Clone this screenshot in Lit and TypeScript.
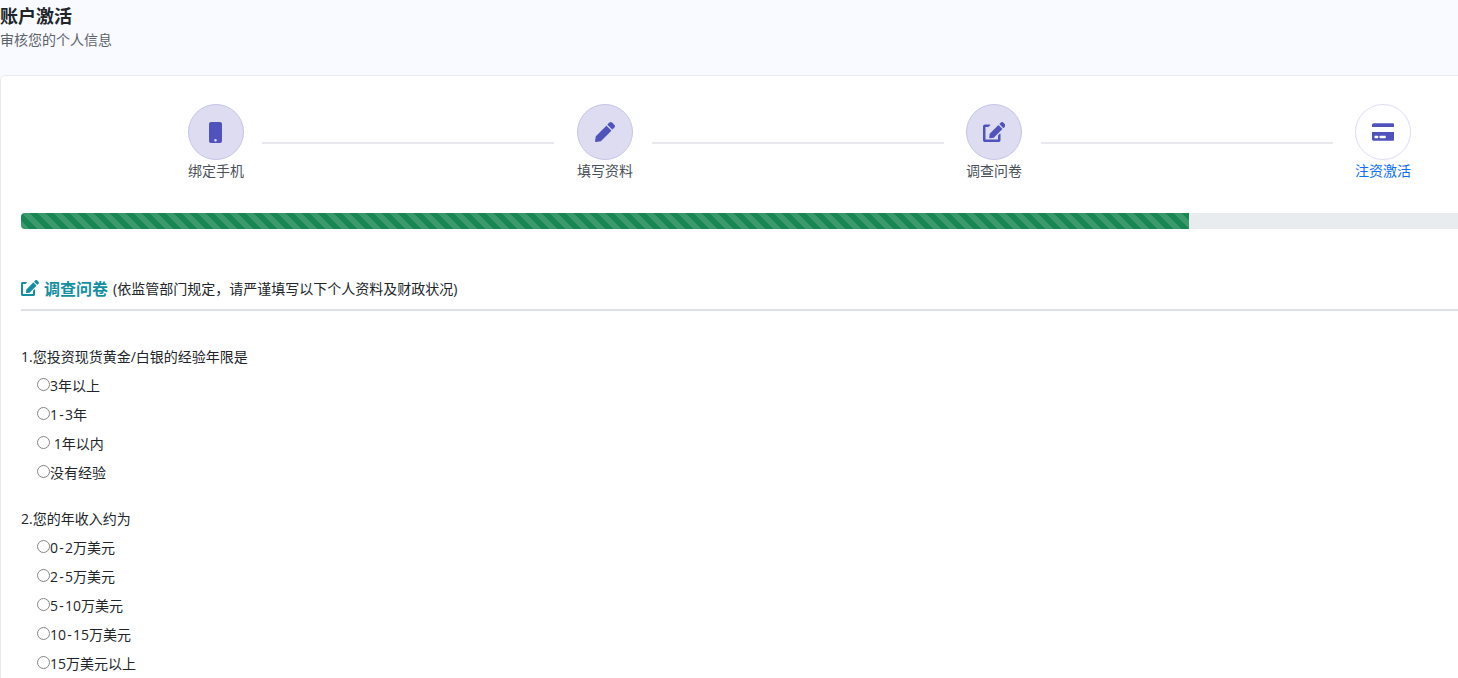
import { LitElement, html, css, svg } from "lit";
import { customElement } from "lit/decorators.js";

const ICONS = {
  mobile: { vb: "0 0 320 512", d: "M272 0H48C21.5 0 0 21.5 0 48v416c0 26.5 21.5 48 48 48h224c26.5 0 48-21.5 48-48V48c0-26.5-21.5-48-48-48zM160 480c-17.7 0-32-14.3-32-32s14.3-32 32-32 32 14.3 32 32-14.3 32-32 32z" },
  pen: { vb: "0 0 512 512", d: "M497.9 142.1l-46.1 46.1c-4.7 4.7-12.3 4.7-17 0l-111-111c-4.7-4.7-4.7-12.3 0-17l46.1-46.1c18.7-18.7 49.1-18.7 67.9 0l60.1 60.1c18.8 18.7 18.8 49.1 0 67.9zM284.2 99.8L21.6 362.4.4 483.9c-2.9 16.4 11.4 30.6 27.8 27.8l121.5-21.3 262.6-262.6c4.7-4.7 4.7-12.3 0-17l-111-111c-4.8-4.7-12.4-4.7-17.1 0z" },
  edit: { vb: "0 0 576 512", d: "M402.6 83.2l90.2 90.2c3.8 3.8 3.8 10 0 13.8L274.4 405.6l-92.8 10.3c-12.4 1.4-22.9-9.1-21.5-21.5l10.3-92.8L388.8 83.2c3.8-3.8 10-3.8 13.8 0zm162-22.9l-48.8-48.8c-15.2-15.2-39.9-15.2-55.2 0l-35.4 35.4c-3.8 3.8-3.8 10 0 13.8l90.2 90.2c3.8 3.8 10 3.8 13.8 0l35.4-35.4c15.2-15.3 15.2-40 0-55.2zM384 346.2V448H64V128h73.1c3.2 0 6.2-1.3 8.5-3.5l40-40c7.6-7.6 2.2-20.5-8.5-20.5H48C21.5 64 0 85.5 0 112v352c0 26.5 21.5 48 48 48h352c26.5 0 48-21.5 48-48V306.2c0-10.7-12.9-16-20.5-8.5l-40 40c-2.2 2.3-3.5 5.3-3.5 8.5z" },
  card: { vb: "0 0 576 512", d: "M0 432c0 26.5 21.5 48 48 48h480c26.5 0 48-21.5 48-48V256H0v176zm192-68c0-6.6 5.4-12 12-12h136c6.6 0 12 5.4 12 12v40c0 6.6-5.4 12-12 12H204c-6.6 0-12-5.4-12-12v-40zm-128 0c0-6.6 5.4-12 12-12h72c6.6 0 12 5.4 12 12v40c0 6.6-5.4 12-12 12H76c-6.6 0-12-5.4-12-12v-40zM576 80v48H0V80c0-26.5 21.5-48 48-48h480c26.5 0 48 21.5 48 48z" },
};
type IconName = keyof typeof ICONS;

const icon = (name: IconName, cls: string) =>
  html`<svg class=${cls} viewBox=${ICONS[name].vb} fill="currentColor" aria-hidden="true">${svg`<path d=${ICONS[name].d}></path>`}</svg>`;

const STEPS: { label: string; icon: IconName; done: boolean }[] = [
  { label: "绑定手机", icon: "mobile", done: true },
  { label: "填写资料", icon: "pen", done: true },
  { label: "调查问卷", icon: "edit", done: true },
  { label: "注资激活", icon: "card", done: false },
];

const QUESTIONS = [
  { title: "1.您投资现货黄金/白银的经验年限是", options: ["3年以上", "1-3年", " 1年以内", "没有经验"] },
  { title: "2.您的年收入约为", options: ["0-2万美元", "2-5万美元", "5-10万美元", "10-15万美元", "15万美元以上"] },
];

/* The reference font sets a wider hyphen than any installed family. */
const withHyphen = (text: string) => {
  const [a, b] = text.split("-");
  return b === undefined ? text : html`${a}<span class="hy">-</span>${b}`;
};

@customElement("app-root")
export class AppRoot extends LitElement {
  static styles = css`
    :host {
      display: block;
      width: 1458px;
      height: 678px;
      overflow: hidden;
      background: #f9faff;
      font-family: "Open Sans", "Noto Sans CJK SC", sans-serif;
      font-size: 14px;
      color: #212529;
    }
    .head {
      height: 75px;
      box-sizing: border-box;
      padding-top: 5px;
    }
    h1 {
      margin: 0;
      font-size: 18px;
      line-height: 22px;
      font-weight: 700;
      color: #212529;
    }
    .sub {
      margin-top: 2px;
      line-height: 21px;
      color: #5c636a;
    }
    .card {
      box-sizing: border-box;
      width: 1598px;
      height: 700px;
      padding: 28px 20px 0;
      background: #fff;
      border: 1px solid #e9ecef;
      border-radius: 5px;
    }
    .steps {
      display: flex;
      align-items: flex-start;
      padding-left: 167px;
    }
    .step {
      width: 56px;
      flex: none;
      display: flex;
      flex-direction: column;
      align-items: center;
    }
    .circle {
      box-sizing: border-box;
      width: 56px;
      height: 56px;
      border-radius: 50%;
      display: flex;
      align-items: center;
      justify-content: center;
      color: #5153bd;
      background: #dddcf1;
      border: 1px solid #c5c4e8;
    }
    .circle.todo {
      background: #fff;
      border-color: #dddcf1;
    }
    .si-mobile { height: 21px; width: 13px; margin-right: 1px; }
    .si-pen { height: 20px; width: 20px; }
    .si-edit { height: 20px; width: 22.5px; }
    .si-card { height: 20px; width: 22.5px; }
    .label {
      line-height: 21px;
      white-space: nowrap;
      color: #495057;
    }
    .label.todo { color: #0d6efd; }
    .line {
      flex: none;
      width: 292px;
      height: 2px;
      margin: 38px 22px 0 19px;
      background: #e9e8ef;
    }
    .line.first { margin-left: 18px; margin-right: 23px; }
    .progress {
      height: 16px;
      margin-top: 32px;
      background: #e9ecef;
      border-radius: 4px;
      overflow: hidden;
    }
    .bar {
      width: 1168px;
      height: 100%;
      background-color: #198754;
      background-image: linear-gradient(45deg, rgba(255,255,255,.15) 25%, transparent 25%, transparent 50%, rgba(255,255,255,.15) 50%, rgba(255,255,255,.15) 75%, transparent 75%, transparent);
      background-size: 16px 16px;
    }
    .section {
      display: flex;
      align-items: center;
      gap: 5px;
      margin-top: 47px;
      height: 23px;
      padding-bottom: 10px;
      border-bottom: 2px solid #dee2e6;
    }
    .si-section { height: 16px; width: 18px; color: #148ea1; }
    .section b {
      font-size: 16px;
      font-weight: 700;
      color: #148ea1;
    }
    .note { color: #212529; }
    .q { margin-bottom: 21px; }
    .qs { margin-top: 34px; }
    .qt { line-height: 23px; padding-bottom: 2px; }
    .opt {
      display: flex;
      align-items: center;
      height: 29px;
      padding-left: 16px;
      white-space: pre;
    }
    .opt input {
      appearance: none;
      box-sizing: border-box;
      width: 13px;
      height: 13px;
      margin: -1px 0 0 0;
      flex: none;
      border: 1px solid #858585;
      border-radius: 50%;
      background: #fff;
    }
    .hy { margin: 0 1.25px; }
  `;

  render() {
    return html`
      <div class="head">
        <h1>账户激活</h1>
        <div class="sub">审核您的个人信息</div>
      </div>
      <div class="card">
        <div class="steps">
          ${STEPS.map(
            (s, i) => html`
              <div class="step">
                <div class="circle ${s.done ? "" : "todo"}">${icon(s.icon, "si-" + s.icon)}</div>
                <div class="label ${s.done ? "" : "todo"}">${s.label}</div>
              </div>
              ${i < STEPS.length - 1 ? html`<div class="line ${i === 0 ? "first" : ""}"></div>` : ""}
            `
          )}
        </div>
        <div class="progress"><div class="bar"></div></div>
        <div class="section">
          ${icon("edit", "si-section")}
          <b>调查问卷</b>
          <span class="note">(依监管部门规定，请严谨填写以下个人资料及财政状况)</span>
        </div>
        <div class="qs">
          ${QUESTIONS.map(
            (q, i) => html`
              <div class="q">
                <div class="qt">${q.title}</div>
                ${q.options.map(
                  (o) => html`<label class="opt"><input type="radio" name="q${i}" /><span>${withHyphen(o)}</span></label>`
                )}
              </div>
            `
          )}
        </div>
      </div>
    `;
  }
}
